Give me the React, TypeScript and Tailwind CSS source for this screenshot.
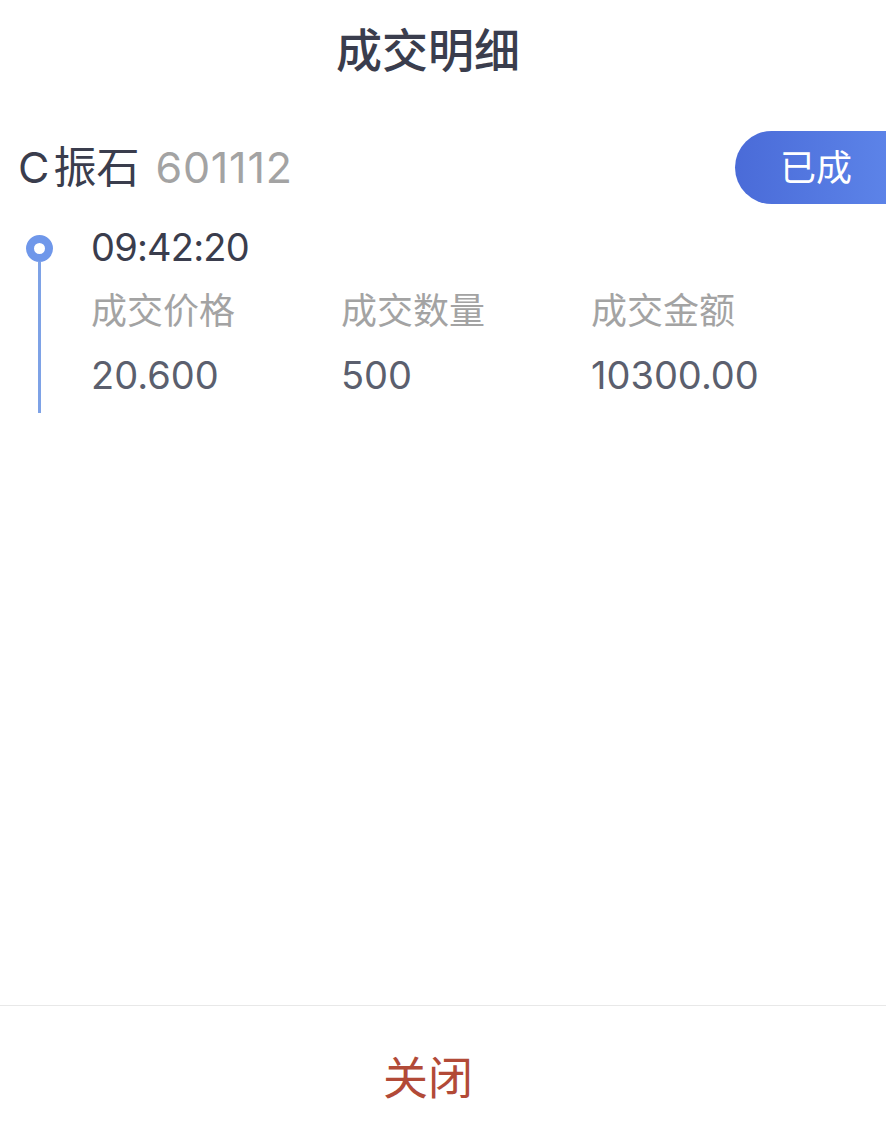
import React from 'react';

const cjk = '"Inter", "Noto Sans CJK SC", sans-serif';

const fields = [
  { label: '成交价格', value: '20.600' },
  { label: '成交数量', value: '500' },
  { label: '成交金额', value: '10300.00' },
];

export default function App() {
  return (
    <div className="flex h-[1126px] w-full flex-col bg-white" style={{ fontFamily: cjk }}>
      {/* 标题 */}
      <div className="flex h-[100px] items-center justify-center pr-[30px]">
        <h1 className="text-[46px] font-medium leading-none text-[#3a3d4d]">成交明细</h1>
      </div>

      {/* 股票名称 + 状态 */}
      <div className="mt-[31px] flex h-[73px] items-center justify-between">
        <div className="flex items-center pl-[18px] text-[43px] leading-none">
          <span className="text-[#3a3d4d]">C</span>
          <span className="ml-[4px] text-[#3a3d4d]">振石</span>
          <span className="ml-[16px] tracking-[0.8px] text-[#a3a3a3]">601112</span>
        </div>
        <div className="flex h-[73px] w-[151px] items-center rounded-l-full bg-gradient-to-r from-[#4a6bd8] to-[#5c83e8] pl-[45px] text-[36px] leading-none text-white">
          已成
        </div>
      </div>

      {/* 成交记录 */}
      <div className="flex pl-[25px]">
        <div className="flex w-[28px] flex-col items-center pt-[31px]">
          <div className="h-[27px] w-[27px] rounded-full border-[8px] border-[#6f97ea] bg-white" />
          <div className="h-[151px] w-[3px] bg-[#7ea2e6]" />
        </div>
        <div className="flex-1 pl-[38px]">
          <div className="mt-[23px] flex h-[40px] items-center text-[38px] leading-none tracking-[-0.8px] text-[#3a3d4d]">
            09:42:20
          </div>
          <div className="mt-[24px] grid grid-cols-[250px_250px_1fr]">
            {fields.map((f) => (
              <div key={f.label} className="flex flex-col">
                <span className="text-[36px] leading-[40px] text-[#a3a3a3]">{f.label}</span>
                <span className="mt-[24px] text-[38px] leading-[40px] text-[#5b5f6e]">{f.value}</span>
              </div>
            ))}
          </div>
        </div>
      </div>

      <div className="flex-1" />

      {/* 关闭 */}
      <div className="flex h-[121px] items-center justify-center border-t border-[#e8e8e8] pr-[30px] pt-[24px]">
        <button className="text-[45px] leading-none text-[#b24a37]">关闭</button>
      </div>
    </div>
  );
}
